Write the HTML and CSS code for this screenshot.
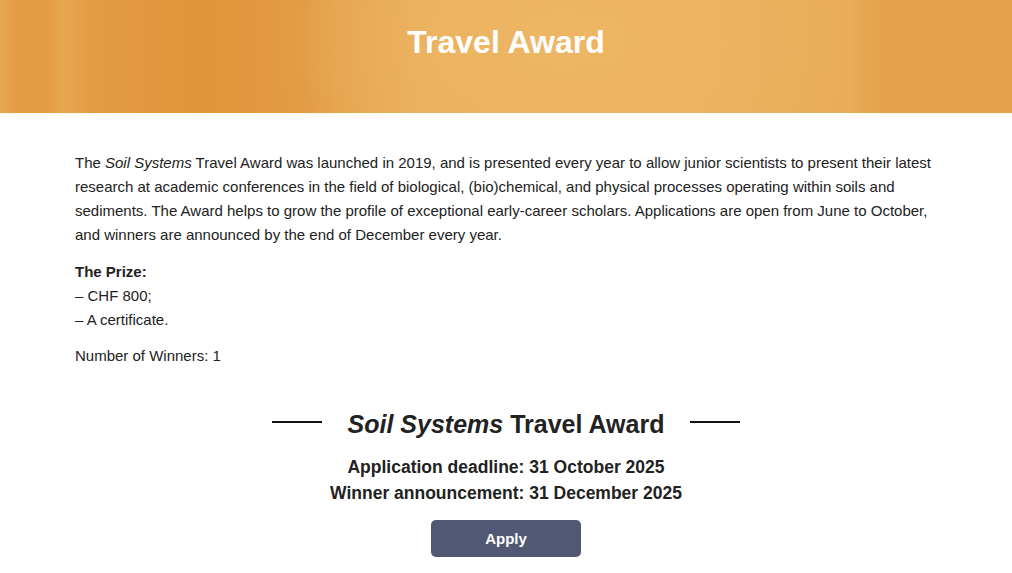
FILE: index.html
```html
<!DOCTYPE html>
<html lang="en">
<head>
<meta charset="utf-8">
<title>Travel Award</title>
<link rel="stylesheet" href="styles.css">
</head>
<body>
<header class="banner">
  <h1 class="banner-title">Travel Award</h1>
</header>
<main class="content">
  <p class="intro">The <em>Soil Systems</em> Travel Award was launched in 2019, and is presented every year to allow junior scientists to present their latest research at academic conferences in the field of biological, (bio)chemical, and physical processes operating within soils and sediments. The Award helps to grow the profile of exceptional early-career scholars. Applications are open from June to October, and winners are announced by the end of December every year.</p>
  <p class="prize"><strong>The Prize:</strong><br>– CHF 800;<br>– A certificate.</p>
  <p class="winners">Number of Winners: 1</p>
  <section class="award">
    <h2 class="award-title"><span class="rule"></span><span class="award-name"><em>Soil Systems</em> Travel Award</span><span class="rule"></span></h2>
    <p class="dates">Application deadline: 31 October 2025<br>Winner announcement: 31 December 2025</p>
    <a class="apply" href="#">Apply</a>
  </section>
</main>
</body>
</html>
```
FILE: styles.css
```css
html, body {
  margin: 0;
  padding: 0;
  background: #ffffff;
}
body {
  font-family: "Liberation Sans", Arial, sans-serif;
  color: #222222;
}
.banner {
  height: 113px;
  display: flex;
  align-items: flex-start;
  justify-content: center;
  background:
    radial-gradient(ellipse 420px 260px at 560px 40px, rgba(240, 190, 110, 0.5), rgba(240, 190, 110, 0) 70%),
    linear-gradient(to right,
      #e8a952 0px, #e39a42 20px, #e39a41 45px, #e8a850 62px, #e39a42 95px,
      #e1953b 200px, #e39a42 300px, #e6a44e 340px, #eaae5a 420px,
      #ebb05c 700px, #e9ad59 845px, #e5a049 885px, #e6a24b 1012px);
}
.banner-title {
  margin: 24px 0 0;
  color: #ffffff;
  font-size: 32px;
  font-weight: bold;
  line-height: 37px;
}
.content {
  width: 862px;
  margin: 0 auto;
  padding-top: 38px;
  font-size: 15px;
  line-height: 24px;
}
.content p {
  margin: 0 0 12px;
}
.intro {
  margin-bottom: 13px !important;
}
.winners {
  margin-bottom: 0 !important;
}
.award {
  display: flex;
  flex-direction: column;
  align-items: center;
  padding-top: 40px;
}
.award-title {
  margin: 0;
  display: flex;
  align-items: center;
  gap: 26px;
  font-size: 25px;
  line-height: 32px;
  font-weight: bold;
  color: #222222;
}
.rule {
  width: 50px;
  height: 2px;
  background: #111111;
  margin-top: -5px;
}
.award-name em {
  font-style: italic;
}
.dates {
  margin: 14px 0 0 !important;
  text-align: center;
  font-size: 17.5px;
  line-height: 26px;
  font-weight: bold;
  color: #222222;
}
.apply {
  margin-top: 14px;
  display: flex;
  align-items: center;
  justify-content: center;
  width: 150px;
  height: 37px;
  border-radius: 5px;
  background: #525873;
  color: #ffffff;
  font-size: 15px;
  font-weight: bold;
  text-decoration: none;
}
```
